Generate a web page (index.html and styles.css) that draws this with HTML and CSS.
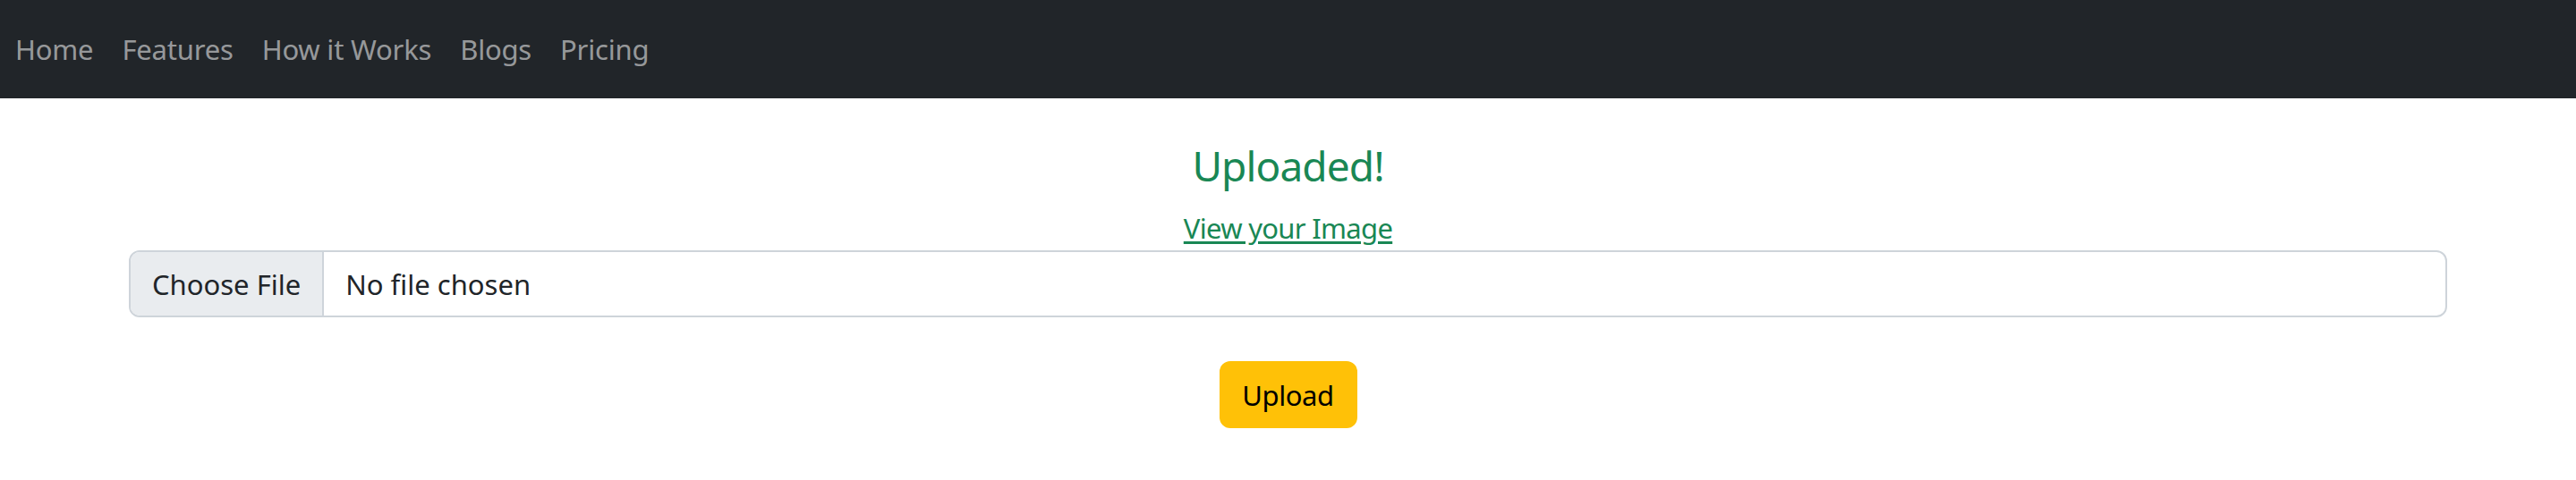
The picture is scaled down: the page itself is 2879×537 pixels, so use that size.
FILE: index.html
```html
<!DOCTYPE html>
<html lang="en">
<head>
<meta charset="utf-8">
<title>Upload</title>
<link rel="stylesheet" href="styles.css">
</head>
<body>
<nav class="navbar">
  <ul class="nav">
    <li><a class="nav-link" href="#">Home</a></li>
    <li><a class="nav-link" href="#">Features</a></li>
    <li><a class="nav-link" href="#">How it Works</a></li>
    <li><a class="nav-link" href="#">Blogs</a></li>
    <li><a class="nav-link" href="#">Pricing</a></li>
  </ul>
</nav>
<main class="content">
  <h4 class="status">Uploaded!</h4>
  <a class="view-link" href="#">View your Image</a>
  <form class="upload-form">
    <label class="file-input">
      <span class="file-btn">Choose File</span>
      <span class="file-name">No file chosen</span>
    </label>
    <button class="btn-upload" type="button">Upload</button>
  </form>
</main>
</body>
</html>
```
FILE: styles.css
```css
html, body {
  margin: 0;
  padding: 0;
  background: #ffffff;
}
body {
  font-family: "Noto Sans", "Open Sans", "DejaVu Sans", sans-serif;
  font-size: 31px;
  letter-spacing: -0.2px;
  color: #212529;
}
.navbar {
  background: #212529;
  height: 110px;
  display: flex;
  align-items: center;
  padding: 0 0 0 1px;
}
.nav {
  list-style: none;
  margin: 0;
  padding: 0;
  display: flex;
}
.nav-link {
  display: block;
  padding: 8px 16px;
  line-height: 46px;
  color: rgba(255, 255, 255, 0.55);
  text-decoration: none;
}
.content {
  display: flex;
  flex-direction: column;
  align-items: center;
}
.status {
  margin: 48px 0 0;
  font-size: 46px;
  font-weight: 400;
  line-height: 55px;
  letter-spacing: -0.9px;
  color: #198754;
}
.view-link {
  margin-top: 19px;
  line-height: 46px;
  letter-spacing: -0.7px;
  color: #198754;
  text-decoration: underline;
  text-underline-offset: 3px;
}
.upload-form {
  margin-top: 2px;
  display: flex;
  flex-direction: column;
  align-items: center;
  width: 2591px;
}
.file-input {
  box-sizing: border-box;
  width: 100%;
  height: 75px;
  display: flex;
  align-items: stretch;
  border: 2px solid #ced4da;
  border-radius: 12px;
  overflow: hidden;
  background: #ffffff;
  line-height: 46px;
  letter-spacing: 0;
}
.file-btn {
  display: flex;
  align-items: center;
  padding: 0 24px;
  background: #e9ecef;
  border-right: 2px solid #ced4da;
  color: #212529;
}
.file-name {
  display: flex;
  align-items: center;
  padding: 0 24px;
  color: #212529;
}
.btn-upload {
  margin-top: 49px;
  box-sizing: border-box;
  height: 75px;
  width: 154px;
  padding: 0;
  border: 0;
  border-radius: 12px;
  background: #ffc107;
  color: #000000;
  font-family: inherit;
  font-size: 31px;
  letter-spacing: -0.4px;
  line-height: 46px;
}
```
